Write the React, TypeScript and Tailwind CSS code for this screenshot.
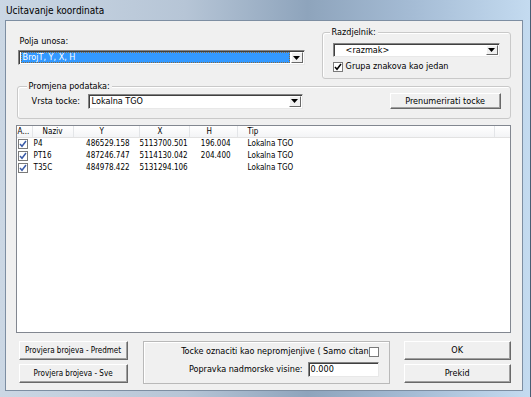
import React from 'react'

const font = "font-['DejaVu_Sans_Condensed','Liberation_Sans',Arial,sans-serif]"

function Arrow() {
  return (
    <div className="h-full w-[12px] bg-[#f0f0f0] border border-t-white border-l-white border-r-[#696969] border-b-[#696969] flex items-center justify-center">
      <svg width="7" height="4" viewBox="0 0 7 4">
        <path d="M0 0h7L3.5 4z" fill="#000" />
      </svg>
    </div>
  )
}

function Combo({ text, width, height, selected, pad = 'pl-[1px]' }: { text: string; width: string; height: string; selected?: boolean; pad?: string }) {
  return (
    <div className={`${width} ${height} bg-white border border-t-[#848484] border-l-[#848484] border-b-[#e8e8e8] border-r-[#e8e8e8] shadow-[inset_1px_1px_0_#404040] flex items-stretch p-[1px] pl-[2px]`}>
      {selected ? (
        <div className="flex-1 bg-[#3399ff] text-white leading-[11px] pl-[2px] outline-1 outline-dotted outline-[#8c6a3c] -outline-offset-1 flex items-center mr-[1px]">{text}</div>
      ) : (
        <div className={`flex-1 leading-[11px] flex items-center ${pad}`}>{text}</div>
      )}
      <Arrow />
    </div>
  )
}

function Check({ checked, color = '#000' }: { checked?: boolean; color?: string }) {
  return (
    <div className="w-[10px] h-[10px] shrink-0 bg-white border border-[#7a7a7a] flex items-center justify-center">
      {checked && (
        <svg width="8" height="8" viewBox="0 0 8 8">
          <path d="M1 4l2 2.3L7 1" stroke={color} strokeWidth="1.5" fill="none" />
        </svg>
      )}
    </div>
  )
}

function Btn({ label, className }: { label: string; className: string }) {
  return (
    <div className={`${className} bg-[#f0f0f0] border border-t-white border-l-white border-r-[#696969] border-b-[#696969] shadow-[inset_-1px_-1px_0_#a0a0a0] flex items-center justify-center leading-[11px] whitespace-nowrap`}>
      {label}
    </div>
  )
}

function GroupLabel({ text, ml }: { text: string; ml: string }) {
  return <div className={`-mt-[6px] ${ml} px-[2px] bg-[#f0f0f0] self-start leading-[11px]`}>{text}</div>
}

const rows = [
  { n: 'P4', y: '486529.158', x: '5113700.501', h: '196.004', t: 'Lokalna TGO' },
  { n: 'PT16', y: '487246.747', x: '5114130.042', h: '204.400', t: 'Lokalna TGO' },
  { n: 'T35C', y: '484978.422', x: '5131294.106', h: '', t: 'Lokalna TGO' },
]

export default function App() {
  return (
    <div className={`${font} text-[9px] text-black w-[531px] h-[397px] bg-[linear-gradient(90deg,#cbd7e4_0%,#b6c5d6_35%,#8ea4bc_58%,#a5bcd5_78%,#c4dbf0_100%)] flex flex-col border-r border-[#4a5d73]`}>
      {/* title bar */}
      <div className="h-[20px] pl-[6px] pt-[5px] leading-[11px] text-[10px]">Ucitavanje koordinata</div>

      <div className="flex">
        <div className="w-[5px]" />
        {/* client */}
        <div className="w-[518px] h-[371px] bg-[#f0f0f0] border border-[#7d8ea2] pl-[10px] pr-[11px] pt-[11px] flex flex-col">
          {/* top row */}
          <div className="flex h-[47px]">
            <div className="ml-[2px] w-[287px] flex flex-col">
              <div className="pl-[2px] mt-[4px] leading-[11px]">Polja unosa:</div>
              <div className="mt-[3px]">
                <Combo text="BrojT, Y, X, H" width="w-[287px]" height="h-[15px]" selected />
              </div>
            </div>
            <div className="ml-[17px] w-[189px] h-[47px] border border-[#c9c9c9] rounded-[3px] shadow-[inset_1px_1px_0_#fff] flex flex-col">
              <GroupLabel text="Razdjelnik:" ml="ml-[7px]" />
              <div className="mt-[5px] ml-[10px]">
                <Combo text="<razmak>" width="w-[167px]" height="h-[14px]" pad="pl-[10px]" />
              </div>
              <div className="mt-[4px] ml-[10px] flex items-center gap-[3px] h-[11px] leading-[11px]">
                <Check checked />
                <span>Grupa znakova kao jedan</span>
              </div>
            </div>
          </div>

          {/* Promjena podataka */}
          <div className="mt-[7px] ml-[1px] w-[494px] h-[33px] border border-[#c9c9c9] rounded-[3px] shadow-[inset_1px_1px_0_#fff] flex flex-col">
            <GroupLabel text="Promjena podataka:" ml="ml-[9px]" />
            <div className="mt-[1px] h-[16px] flex items-center">
              <div className="ml-[14px] w-[56px] leading-[11px]">Vrsta tocke:</div>
              <Combo text="Lokalna TGO" width="w-[215px]" height="h-[15px]" />
              <Btn label="Prenumerirati tocke" className="ml-auto mr-[9px] w-[111px] h-[16px]" />
            </div>
          </div>

          {/* list */}
          <div className="mt-[6px] w-[495px] h-[208px] bg-white border border-[#828790] text-[8px] flex flex-col">
            <div className="flex h-[12px] leading-[11px] border-b border-[#e2e2e2] bg-[linear-gradient(#ffffff,#f3f4f6)] whitespace-nowrap">
              <div className="w-[16px] shrink-0 border-r border-[#e3e5e8] pl-[1px]">A...</div>
              <div className="w-[41px] border-r border-[#e3e5e8] pl-[10px]">Naziv</div>
              <div className="w-[66px] border-r border-[#e3e5e8] pl-[26px]">Y</div>
              <div className="w-[50px] border-r border-[#e3e5e8] pl-[18px]">X</div>
              <div className="w-[48px] border-r border-[#e3e5e8] pl-[17px]">H</div>
              <div className="w-[257px] border-r border-[#e3e5e8] pl-[10px]">Tip</div>
              <div className="flex-1" />
            </div>
            {rows.map((r) => (
              <div key={r.n} className="flex h-[12px] leading-[12px] whitespace-nowrap">
                <div className="w-[16px] pl-[1px] flex items-center">
                  <Check checked color="#3a5ba8" />
                </div>
                <div className="w-[41px] pl-[1px]">{r.n}</div>
                <div className="w-[66px] text-right pr-[10px]">{r.y}</div>
                <div className="w-[50px] text-right pr-[5px]">{r.x}</div>
                <div className="w-[48px] text-right pr-[7px]">{r.h}</div>
                <div className="w-[257px] pl-[10px]">{r.t}</div>
              </div>
            ))}
          </div>

          {/* bottom row */}
          <div className="mt-[8px] flex">
            <div className="ml-[3px] w-[109px] flex flex-col gap-[4px] text-[8px]">
              <Btn label="Provjera brojeva - Predmet" className="h-[19px]" />
              <Btn label="Provjera brojeva - Sve" className="h-[19px]" />
            </div>
            <div className="ml-[15px] w-[247px] h-[43px] border border-[#b9b9b9] shadow-[inset_1px_1px_0_#fff] flex flex-col items-end pr-[10px] pt-[4px]">
              <div className="flex items-center h-[11px] leading-[11px] whitespace-nowrap">
                <span>Tocke oznaciti kao nepromjenjive ( Samo citan</span>
                <Check />
              </div>
              <div className="mt-[5px] flex items-center h-[15px]">
                <span className="leading-[11px]">Popravka nadmorske visine:</span>
                <div className="ml-[5px] w-[71px] h-[15px] bg-white border border-t-[#848484] border-l-[#848484] border-b-[#e8e8e8] border-r-[#e8e8e8] shadow-[inset_1px_1px_0_#404040] pl-[2px] leading-[12px]">
                  0.000
                </div>
              </div>
            </div>
            <div className="ml-[14px] w-[107px] flex flex-col gap-[4px]">
              <Btn label="OK" className="h-[19px]" />
              <Btn label="Prekid" className="h-[19px]" />
            </div>
          </div>
        </div>
        <div className="w-[8px]" />
      </div>
    </div>
  )
}
